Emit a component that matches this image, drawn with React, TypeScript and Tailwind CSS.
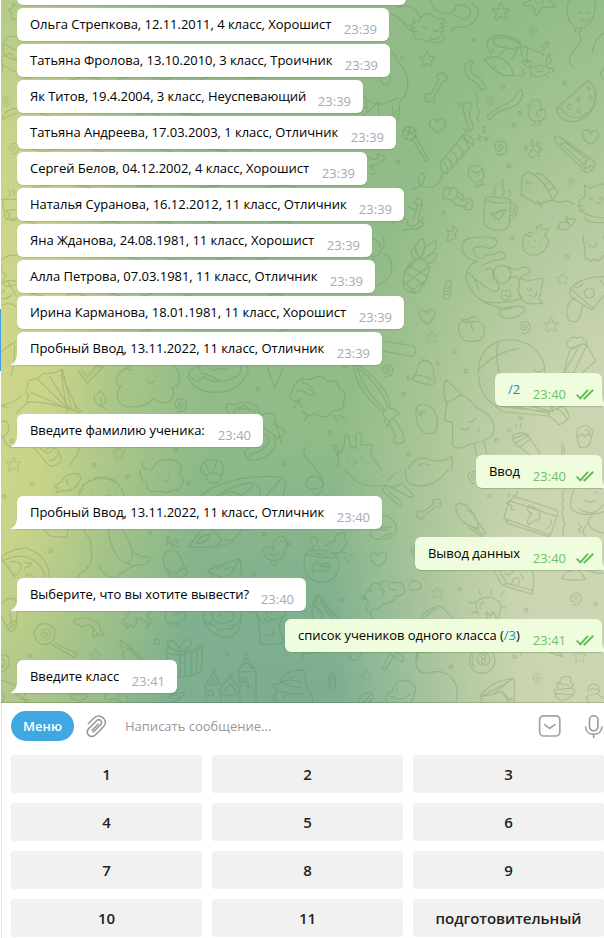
import type { ReactNode } from "react";

type Incoming = { text: string; time: string; box: string; last?: boolean };

const students: Incoming[] = [
  { text: "Ольга Стрепкова, 12.11.2011, 4 класс, Хорошист", time: "23:39", box: "w-[372px]" },
  { text: "Татьяна Фролова, 13.10.2010, 3 класс, Троичник", time: "23:39", box: "w-[373px]" },
  { text: "Як Титов, 19.4.2004, 3 класс, Неуспевающий", time: "23:39", box: "w-[346px]" },
  { text: "Татьяна Андреева, 17.03.2003, 1 класс, Отличник", time: "23:39", box: "w-[379px]" },
  { text: "Сергей Белов, 04.12.2002, 4 класс, Хорошист", time: "23:39", box: "w-[350px]" },
  { text: "Наталья Суранова, 16.12.2012, 11 класс, Отличник", time: "23:39", box: "w-[387px]" },
  { text: "Яна Жданова, 24.08.1981, 11 класс, Хорошист", time: "23:39", box: "w-[355px]" },
  { text: "Алла Петрова, 07.03.1981, 11 класс, Отличник", time: "23:39", box: "w-[358px]" },
  { text: "Ирина Карманова, 18.01.1981, 11 класс, Хорошист", time: "23:39", box: "w-[387px]" },
  { text: "Пробный Ввод, 13.11.2022, 11 класс, Отличник", time: "23:39", box: "w-[365px]", last: true },
];

const keys = ["1", "2", "3", "4", "5", "6", "7", "8", "9", "10", "11", "подготовительный"];

function InBubble({ text, time, box, last }: Incoming) {
  return (
    <div className={`relative ml-4 flex h-[33px] shrink-0 justify-between rounded-[6px] bg-white pl-[13px] pr-3 shadow-[0_1px_1px_rgba(80,110,70,0.25)] ${box} ${last ? "rounded-bl-none" : ""}`}>
      {last && (
        <svg className="absolute -left-[6px] bottom-0" width="7" height="12" viewBox="0 0 7 12">
          <path d="M7 0H6C6 6 4 9.5 0.3 11.2C0 11.5 0.1 12 .6 12H7Z" fill="#fff" />
        </svg>
      )}
      <span className="pt-[7px] leading-[18px] tracking-[-0.03px] whitespace-nowrap">{text}</span>
      <span className="pt-[12px] leading-[18px] text-[#a0acb6]">{time}</span>
    </div>
  );
}

function OutBubble({ children, time, box }: { children: ReactNode; time: string; box: string }) {
  return (
    <div className={`relative mr-[2px] flex h-[33px] shrink-0 self-end rounded-[6px] rounded-br-none bg-[#effdde] pl-[13px] shadow-[0_1px_1px_rgba(90,140,70,0.4)] ${box}`}>
      <span className="pt-[7px] leading-[18px] tracking-[-0.03px] whitespace-nowrap">{children}</span>
      <span className="ml-auto pt-[12px] leading-[18px] text-[#6cc264]">{time}</span>
      <svg className="mt-[16px] mr-2 ml-[10px]" width="18" height="11" viewBox="0 0 18 11" fill="none" stroke="#5cbf52" strokeWidth="1.9">
        <path d="M.6 5.6L4.3 9.3L12 .8M7.6 8.6L8.5 9.4L17.2 .8" />
      </svg>
      <svg className="absolute -right-[2px] bottom-0" width="2" height="12" viewBox="0 0 2 12">
        <path d="M0 0C0 4 .7 7 2 9V12H0Z" fill="#effdde" />
      </svg>
    </div>
  );
}

type P = { x: number; y: number; s?: number; r?: number };

const at = ({ x, y, s = 1, r = 0 }: P) => `translate(${x} ${y}) rotate(${r}) scale(${s})`;

const Star = (p: P) => (
  <path transform={at(p)} d="M-3-25Q0-29 3-24L8-9L23-10Q28-9 24-5L13 4L18 19Q18 25 13 22L0 13L-13 23Q-18 25-17 19L-13 4L-24-4Q-28-9-22-10L-8-9Z" />
);
const Heart = (p: P) => (
  <path transform={at(p)} d="M2 23Q-24 8-24-6C-24-20-6-24 0-9C6-27 26-22 24-5Q21 10 2 23Z" />
);
const Spiral = (p: P) => (
  <path transform={at(p)} d="M3 2C-1 5-6 0-2-5C4-11 13-3 9 6C4 16-12 13-13 0C-14-14 2-22 14-14C26-5 22 15 8 21Q0 24-6 21" />
);
const Candy = (p: P) => (
  <path transform={at(p)} d="M-12-14Q12-18 12-10V12Q0 20-12 13ZM-12-14L-9-30Q2-38 9-29L11-15M-12 13L-8 30Q2 36 10 29L11 14M-12-4L12-11M-12 6L12 0" />
);
const Bone = (p: P) => (
  <path transform={at(p)} d="M-27-6H27C24-19 38-22 42-12C54-12 53 2 44 3C50 15 34 20 27 7H-27C-32 20-46 16-42 5C-55 2-52-12-42-11C-40-23-25-19-27-6Z" />
);
const Chick = (p: P) => (
  <path transform={at(p)} d="M-22-23L-33-16L-22-12C-38 5-32 28-8 34C22 38 36 14 22-6L8-2C18-22 10-38-6-37C-19-36-24-28-22-23M-8-24V-22M14-4C-8-2-8 16 8 18M-8 34V46L-17 48M8 34V46L0 48" />
);
const Dots = ({ list }: { list: number[][] }) => (
  <>
    {list.map(([x, y], i) => (
      <circle key={i} cx={x} cy={y} r={5} />
    ))}
  </>
);

function Wallpaper() {
  return (
    <svg className="absolute inset-0" width="603" height="703" viewBox="1 0 603 703" fill="none" stroke="#4f8040" strokeOpacity="0.25" strokeWidth="3.5" strokeLinecap="round" strokeLinejoin="round">
      {/* upper left strip, mostly behind messages */}
      <g transform="scale(.33333)">
        <path d="M24 28L36 24L40 10L50 20M24 28L34 38L36 60L50 54M10 130Q20 102 50 110M12 132L50 152M10 130V160Q20 176 50 180M6 170L30 160L50 178M3 190Q28 210 50 216M4 174Q12 196 6 216" />
        <path d="M8 350Q22 326 50 325M8 358Q26 345 50 340M8 350V358M5 598H50M8 600L16 655Q32 664 50 660M24 570Q40 578 26 586M38 570Q48 576 42 584M18 632L50 628M18 632L30 645L20 658L50 656" />
        <Spiral x={16} y={302} s={0.7} /><Spiral x={38} y={444} s={0.8} />
        <path d="M72 235L110 228M210 240L260 230L300 236M355 238L400 228M460 234Q490 242 520 233M600 238L630 230M740 235L790 230M120 341L150 348M410 344L440 338L480 345M540 340L600 346M90 447L130 455L180 446M270 446L310 456M480 448L520 456M620 445L680 455M720 446L750 452M100 562L150 556M230 556L270 562M410 560L460 556M600 562L660 556M800 562Q850 552 890 562M70 663L110 671M300 670Q330 658 360 670M470 664L520 670M620 663L650 670M810 670Q840 656 880 671" />
      </g>
      {/* upper right */}
      <g transform="translate(302 0) scale(.33333)">
        <path d="M265 40L300 60Q308 74 320 88L345 95M284 22L310 18Q330 18 345 36L356 53Q375 30 395 50L410 60Q425 50 430 65L416 70L430 80L415 83L425 94L413 96L426 112Q424 130 408 129L350 117Q334 116 335 96L325 90L340 82L320 78L338 70L330 60L350 66L356 53M385 0C388 24 410 42 440 40C455 36 462 24 462 16C490 10 520 28 500 50C480 66 470 45 450 42M445 94C465 70 490 90 510 70C532 50 540 30 510 12M362 78Q368 92 378 80M394 88Q402 100 409 90M383 116Q402 122 414 112M384 105H386M405 109H407" />
        <path d="M661 12L688 0M661 12Q670 22 690 17Q700 28 703 46Q715 34 722 20Q742 26 760 20Q754 10 738 0M700 0L704 8M724 2L720 9" />
        <path d="M823 84C785 60 790 0 808 0M823 84C860 90 885 50 878 0M823 84L818 94Q830 100 841 90L832 84M832 98C850 140 800 150 802 182Q804 198 817 202M831 35Q832 42 838 39M855 37Q860 41 865 38M835 58Q850 72 862 56" />
        <path d="M557 140C550 110 580 98 620 110C660 120 664 142 645 148C600 144 575 140 572 118C610 100 655 128 655 138M557 140L566 162M572 145L570 162M645 148L630 180M655 140L660 170M547 178L573 170C600 170 630 190 634 226C610 232 590 220 574 207L582 197M547 178Q557 190 573 206M610 150L590 165M634 226L665 228M640 142L670 140L718 160Q734 160 720 170M676 145L674 185M718 143L735 125Q744 126 735 140L715 157" />
        <path d="M683 211Q710 182 744 208Q744 225 710 230Q685 232 683 211ZM690 198L676 200Q655 190 665 180Q674 178 675 190Q680 176 688 185Q688 194 680 206M734 196Q730 170 742 162V176Q750 176 747 185L738 195M744 203Q760 203 752 216M664 209Q656 218 670 222M684 230V234M736 228L737 233M698 205H704M720 206H724M705 214Q714 220 720 212" />
        <path d="M490 194Q506 176 515 185C496 205 506 224 530 234Q545 242 551 263Q545 274 536 270Q536 256 520 248C494 234 484 218 490 194ZM556 348Q580 325 612 312Q640 300 645 278Q650 268 661 272C666 300 645 320 615 326Q580 335 564 358Q556 358 556 348ZM484 318Q490 302 508 309C508 330 496 340 505 358Q514 370 514 386L498 395C503 370 480 350 484 318ZM526 274C512 290 538 300 526 310C518 322 540 330 530 342Q520 352 532 367" />
        <path d="M763 325Q770 368 820 364C885 350 890 280 874 260M763 325L860 240L874 260M763 325L778 323Q790 356 830 352C872 340 882 310 880 280M828 292Q840 298 830 305Q820 302 828 292M803 311Q812 320 802 328Q790 320 803 311M831 323Q842 335 830 339Q820 330 831 323M862 285Q875 292 867 300Q856 298 862 285M858 258Q870 264 862 270Q852 266 858 258" />
        <path d="M329 415L372 484Q380 484 376 474L340 407M310 405Q330 400 340 388M306 388Q330 400 342 414M324 382Q318 400 316 416" /><circle cx="322" cy="400" r="20" />
        <path d="M416 486L485 403Q500 402 514 420Q518 436 505 440L435 520Q420 520 416 500ZM435 520Q440 505 425 487M447 508Q456 484 430 470M464 489Q470 468 445 452M480 470Q490 450 462 432M496 450Q505 430 480 411M485 403Q486 420 514 435M422 520C418 565 370 570 350 550C345 520 360 515 367 525C370 550 350 564 327 569M488 395Q498 390 482 384M540 380L550 379L542 390L552 394L544 398M530 405L537 410L526 415L535 422" />
        <path d="M757 412L770 408L858 470Q855 490 835 500L763 430ZM757 412L763 430M858 470L876 482Q884 495 876 500Q860 494 845 513Q835 512 835 500M845 513Q860 525 876 500M790 427L849 473M775 430L842 490M790 427L775 436M850 482Q858 496 843 504" />
        <path d="M682 460Q692 440 704 456Q716 462 710 470Q698 466 692 474Q680 470 682 460ZM670 436Q664 448 674 452Q680 444 670 436M690 420Q680 434 693 440Q700 430 690 420M708 425Q698 436 710 442Q720 430 708 425M716 443Q706 450 714 456Q724 450 716 443" />
        <path d="M520 550L525 562L535 553L545 556L540 543M502 530C492 510 505 494 526 498C550 505 552 535 535 543C520 550 508 542 502 530ZM507 511Q525 522 545 510M518 522Q524 510 530 525" />
        <path d="M422 582L432 560L446 568L456 562L468 572L463 590L450 600L438 598L430 592L422 600ZM463 590Q475 590 480 603L500 594L512 604L508 628L492 630L482 618Q460 620 450 600M472 578L484 585L480 603M446 568L440 585M492 630L488 618L500 606" />
        <path d="M338 604A11 10 0 1 1 360 606A11 10 0 1 1 338 604M346 616L334 660M360 614L348 658M302 650L320 662L315 670C325 688 345 680 352 660L360 668M360 650L364 675Q340 694 325 686L302 692M320 622L348 632" />
        <path d="M549 594C570 586 620 594 626 602Q615 612 580 607Q552 604 549 594ZM549 594L545 672Q560 692 600 690Q620 688 622 670L626 602M626 612C655 608 650 658 620 660M624 625Q645 622 634 642L622 650M562 642L612 628L592 660L582 652L576 657V644L612 628M562 642L576 646M574 585C590 575 570 570 582 560M600 587C620 570 590 560 604 538M620 590Q632 578 618 570" />
        <path d="M657 585L660 528L680 515Q730 540 752 602C725 600 710 620 700 608C680 598 665 590 657 585ZM680 515Q694 530 712 520Q750 545 767 575L752 602M670 545L680 553L688 546M752 602L775 607Q800 598 815 613M740 542L725 560M755 560L740 576M706 604L720 620" />
        <path d="M848 555L850 590M848 555L866 566Q880 555 905 552M850 590Q825 600 832 625Q845 650 906 654M862 600Q866 590 872 598M892 595Q905 590 902 600M880 608L888 612L896 604M850 654Q850 670 906 668M828 617L845 619M832 632L848 628M802 674C780 650 800 640 795 660Q808 650 822 660Q802 690 780 690Q770 690 772 670Q780 664 800 668M772 670L765 690M668 705Q690 690 696 700M705 676L703 690L718 672L720 690L740 686L728 705M440 705L436 688L450 696L454 678L466 690L457 705" />
        <path d="M245 166C265 140 280 160 286 186C325 215 330 270 290 310M295 167L297 178M302 165L305 180M186 290Q220 325 260 305L288 295M186 345L228 306L232 360M240 225Q230 250 250 256Q270 245 264 225M182 322Q200 330 192 305M270 315L275 345L294 318L288 360M196 470Q230 490 228 460L250 470Q244 490 200 500M204 520Q230 530 210 500M870 160Q880 110 906 100M906 205L896 220L903 240M280 650L302 640L270 674" />
        <Star x={596} y={36} /><Star x={375} y={178} s={0.9} /><Heart x={406} y={376} /><Heart x={864} y={410} s={1} r={12} />
        <Spiral x={689} y={92} s={0.7} /><Spiral x={564} y={300} s={0.65} /><Spiral x={592} y={441} s={1.05} /><Spiral x={805} y={545} s={0.6} />
        <Bone x={403} y={264} r={-60} s={1} /><Chick x={706} y={333} s={0.9} />
        <Dots list={[[517, 120], [788, 249], [603, 260], [653, 340], [635, 374], [476, 316], [552, 416], [621, 497], [287, 487], [424, 638], [47, 445]]} />
      </g>
      {/* middle left */}
      <g transform="translate(0 235) scale(.33333)">
        <path d="M4 75Q30 55 50 62M4 90Q0 115 20 120Q0 140 18 155L48 150M4 190Q20 195 35 180M15 165L4 175M24 140L48 182M5 145Q22 130 48 140M6 210Q30 200 48 214M4 350Q35 325 48 320M44 330Q45 395 32 420M4 512Q50 500 65 480M4 512L25 520" />
        <path d="M78 469L86 437L112 430L130 415L160 415L188 403L185 418L228 516L218 525Q140 500 78 500Q90 485 78 469M188 403L215 525M184 420L202 532M150 425L210 524M112 432L205 522M90 470L200 520M50 535Q70 510 90 502M228 516L245 530M218 525L237 532" />
        <path d="M234 407L262 445L312 392M246 407L262 426L290 392M290 392L308 396M282 480Q300 475 300 468Q320 485 318 500Q304 520 290 506Q280 490 282 480ZM303 485V513L320 522" />
        <path d="M395 391C370 400 345 420 350 445Q352 452 364 453C340 480 355 510 380 515Q440 520 460 490Q490 515 512 495Q530 480 515 458Q545 450 538 420Q534 400 520 392M438 430V435M467 420V425M442 440Q455 450 464 437M384 393Q378 408 396 404" />
        <path d="M605 392Q560 400 565 430Q590 475 650 472Q720 470 744 410Q744 395 738 391M570 420Q590 455 610 425Q650 450 700 430Q730 415 720 392M598 400Q600 420 620 418L660 437M624 396Q635 412 660 400M660 400Q685 410 690 392M800 392L824 460L850 395M870 490C868 475 880 465 883 450L898 433L906 435M870 490Q890 505 906 490M890 470L900 465M880 522L896 500L906 515" />
        <path d="M690 538C675 525 675 510 685 505Q705 515 720 503Q755 495 775 520L780 545C800 530 825 530 825 550L822 570Q848 575 855 590Q852 605 830 610M700 538Q700 520 720 518L760 525Q770 535 768 545M720 525Q716 512 730 510Q745 512 744 527M790 580L808 590Q830 600 828 625C815 665 780 675 755 677Q735 670 733 650L745 640M790 600Q810 600 808 620Q790 650 760 655Q745 660 752 670M825 550L845 630" />
        <path d="M52 637Q20 645 6 600M4 560Q25 550 26 580Q25 600 4 610M100 636L145 690Q160 700 182 680Q185 665 176 650L160 637M118 637L132 650L150 637M134 652Q150 660 160 640M148 675Q165 680 174 655M206 637M238 637Q235 660 208 690M405 637M440 705Q418 690 428 678M455 705Q470 670 500 675Q520 670 545 690L540 705M600 705Q605 675 630 675Q670 668 670 705M615 685L625 705M650 680L640 705M90 176L130 183M200 180Q230 170 260 184M330 176L370 184M420 184L460 176M550 180L590 184M800 184Q830 172 850 184M380 66L420 75M500 70L540 76M650 75L700 68M770 74L800 68M420 290Q440 280 450 292M830 292L860 284" />
        <Spiral x={538} y={508} /><Star x={357} y={655} s={0.7} /><Star x={41} y={689} s={0.8} />
        <Dots list={[[773, 462], [526, 646], [282, 691], [850, 684], [36, 617]]} />
      </g>
      {/* middle right */}
      <g transform="translate(302 235) scale(.33333)">
        <path d="M310 105Q340 50 370 80C398 95 365 150 350 170Q330 182 307 160Q298 140 310 105ZM318 90L378 125M308 110L368 150M305 138L342 175M378 95L306 150M368 140L320 172M342 75L308 112M345 75C320 60 325 42 340 35Q345 55 352 68C325 35 350 15 362 10Q372 30 364 55Q360 65 355 75C365 30 385 20 402 18Q408 45 380 60L365 74Q390 50 405 57Q398 85 372 88" />
        <path d="M205 60L218 75M240 0Q250 15 244 40M210 10Q240 20 236 50Q230 65 212 66M244 56Q280 70 265 120Q250 140 220 155M440 0Q430 20 435 18L464 8L458 0" />
        <path d="M527 80C470 70 470 20 500 10Q540 2 580 10C590 25 580 38 560 40C540 30 505 35 515 50C520 70 545 80 550 58Q570 65 590 50Q610 50 610 65Q600 78 580 75L540 90M527 80C490 90 480 130 510 170C530 200 570 210 595 220L640 215M495 115Q510 105 530 165M510 125L550 155Q580 180 592 160L582 130M550 105Q580 90 575 130M545 200Q600 210 660 190L648 170Q655 145 650 130Q635 120 622 130M618 95C640 112 650 100 665 95Q690 100 680 115Q665 115 650 135M650 130L670 135Q690 138 705 132L722 130V150L716 160Q720 175 710 188L722 206H695Q660 210 648 172M595 220Q590 240 600 245Q625 260 660 235Q675 225 660 215Q640 210 625 220L595 225M600 180Q595 160 612 170Q622 160 625 175Q630 192 612 195Q595 196 600 180M607 180L620 184M675 160L682 168L690 160M695 185Q705 180 706 170M682 180L690 184" /><circle cx="600" cy="118" r="27" />
        <path d="M665 5Q655 45 680 58Q725 70 740 20L730 0M672 0Q680 10 690 0M680 20V22M700 15V17M715 25V27M675 38V40M695 35V37M712 45V47M695 52V54M725 10V12M846 0C838 20 856 40 846 65Q848 76 858 70L866 80Q878 66 888 78Q898 70 906 60M855 18V22M877 12V16M860 28Q880 50 884 20M906 0V10" />
        <path d="M805 160C830 135 870 125 906 125M805 160Q800 180 812 190L870 225L906 180M805 160L875 222M820 190C790 200 790 240 800 255Q825 270 835 240L842 210M818 158Q840 155 842 145M895 135L906 150" /><circle cx="862" cy="174" r="15" />
        <path d="M500 252C460 250 465 300 485 314Q508 325 535 314C560 290 545 252 510 260Q505 280 515 285M508 260Q495 252 480 254Q490 270 508 260M500 252Q510 240 525 250" />
        <path d="M242 318L330 332Q345 336 340 351Q338 366 325 363L240 348" />
        <path d="M785 412Q800 355 806 340M785 412L820 414M806 340Q855 320 855 330L881 378L840 414M806 340L820 340M830 335L790 408M855 330L815 412M800 338Q785 320 802 318Q808 300 825 310Q840 300 845 315Q865 320 850 330" />
        <path d="M528 415C530 330 590 310 640 315C700 325 730 370 728 412M530 425Q530 460 555 492L600 530L740 543L750 513M590 316C580 350 582 380 592 415M650 340C600 350 560 370 530 405M697 405L710 412L728 400M600 515L745 530M640 515L742 535M690 515L755 530L750 513M745 530L782 513Q803 535 800 545Q790 565 770 569Q755 550 740 543M765 520Q785 530 795 558" />
        <path d="M155 392C160 450 200 500 245 530M155 392Q170 385 180 400C230 430 270 490 263 520M163 392C180 450 220 500 252 528M168 400C210 430 250 480 258 520M245 530Q240 545 252 550L262 560Q275 545 292 538Q285 522 263 520M252 550L248 558L256 575Q265 560 262 560M262 565L282 604C270 610 275 628 292 626C310 625 310 605 300 590L275 550" />
        <path d="M332 429C345 420 345 400 350 385Q365 370 382 380C400 395 390 420 400 435Q395 460 365 445Q335 440 332 429ZM340 420Q365 420 395 437M330 430L340 420M368 448L380 444M360 374V370M322 420L324 433M316 424L318 434M402 385L408 390M406 378L412 386M382 425V428" />
        <path d="M342 540C335 500 375 500 395 525Q415 560 400 590Q375 605 355 585Q345 570 342 540ZM344 525L357 540L360 530L370 528M350 540L357 543" />
        <path d="M430 437Q420 460 430 493L432 502Q460 495 475 478Q480 475 465 465L435 436ZM436 500C430 540 420 560 440 560Q452 560 452 570L452 630Q460 645 490 635Q500 625 515 625Q560 615 572 600Q580 575 572 560Q560 530 525 520Q515 500 475 478M500 560Q515 560 520 548M530 577V590M475 580Q490 590 500 580M515 625L525 660M545 620L555 655" />
        <path d="M632 600L660 592L680 602L685 612M632 600Q628 615 640 625L652 637L685 612M640 625L682 600M655 637L690 665M685 612L715 655M632 610L678 596M612 585L622 590M620 578L628 586M655 565V578M642 570L645 580M780 625V660M787 635V655" />
        <path d="M824 600C825 570 850 565 868 580Q875 595 868 605L864 625Q850 645 832 635Q828 620 824 600ZM824 600L830 605L840 597L848 605L858 597L868 605M850 585Q862 583 862 595" />
        <path d="M0 430Q20 440 40 425Q70 420 75 440Q110 430 110 460Q140 470 125 500Q130 530 95 525Q70 560 40 535Q15 550 0 530M0 465Q25 490 40 475L20 460M5 530L15 545L5 560M95 540L105 555M110 540L130 550M0 440L30 455" />
        <path d="M93 630Q110 625 108 660L125 640L130 600Q140 585 145 635L163 640L160 600Q170 585 178 600V630L210 628L205 655L212 670L240 705M93 630L110 670L107 700M140 670L143 675M175 668L180 672M150 690L165 680M12 637C-15 665 45 690 62 735M320 700Q330 670 370 668Q410 690 449 664Q455 690 448 705M350 692Q360 680 380 690" />
        <Candy x={437} y={165} r={8} s={0.85} /><Heart x={375} y={244} /><Star x={390} y={307} s={0.7} /><Star x={781} y={133} s={0.7} /><Star x={748} y={271} s={0.8} />
        <Spiral x={666} y={275} s={0.9} /><Spiral x={254} y={405} s={0.9} />
        <Dots list={[[629, 10], [795, 64], [458, 350], [491, 408], [305, 477], [84, 593], [320, 658], [584, 616], [655, 548], [128, 392]]} />
      </g>
      {/* bottom left */}
      <g transform="translate(0 470) scale(.33333)">
        <path d="M163 50L176 55L168 69L185 62C215 68 240 45 242 20C235 5 205 10 190 25Q180 40 176 40ZM200 28Q198 38 205 42" />
        <path d="M235 78Q240 45 275 32Q300 20 330 30Q365 40 372 77M238 60L245 70M250 60Q240 40 260 42Q265 25 278 32Q285 18 300 24Q315 15 325 28Q345 25 348 40M275 60V64M348 60V64M290 77Q300 85 330 77" />
        <path d="M250 178L262 200Q270 200 270 212Q278 225 270 232Q282 245 272 252Q282 265 272 272Q275 285 262 290Q260 305 245 305L232 322M325 178C330 240 360 280 385 278C410 260 390 210 365 178M400 245Q410 260 450 262C455 275 440 285 410 285Q390 290 385 278M335 250M298 285Q305 320 345 322M350 322Q370 300 410 285M130 178L150 198L200 203L205 178" />
        <path d="M420 0Q415 25 440 38Q440 75 480 62Q495 75 520 60Q545 65 543 45Q560 30 540 15L542 0M480 20V24M508 20V24M488 30Q498 42 506 30M602 0Q605 15 620 15L635 5L660 15Q672 10 670 0M618 16Q620 40 645 40Q665 35 664 14" />
        <path d="M605 75C650 40 720 20 790 20Q855 15 858 40L850 75M650 77Q720 35 760 40L750 60L722 77M660 77Q700 55 722 77M760 40Q785 50 780 77M800 77L840 30M565 232L605 178M565 232Q680 235 700 210L725 178M590 220Q595 195 632 193Q620 220 590 220M633 178L665 208L650 232M665 208L700 210" />
        <path d="M500 225L503 198Q518 208 500 225M513 228Q515 210 535 208Q535 225 513 228M517 234L538 230M490 270C490 240 520 235 535 250L558 300Q565 320 540 322L515 323L497 300ZM497 300Q505 290 510 308Q520 300 532 310Q540 295 555 295M523 310Q530 318 535 308" />
        <path d="M790 245C795 220 820 235 822 240Q815 215 830 203Q850 190 860 215Q865 230 852 240C862 255 840 275 815 270Q795 268 790 245ZM860 215L872 222L858 228M843 212V214M806 250Q825 262 838 248M815 272V282L828 286M829 270V280" />
        <path d="M622 302Q680 275 720 267Q728 295 720 323M622 302L640 323M622 302L665 323M655 300C655 285 672 285 678 300Q690 285 700 295Q698 310 678 322M720 267L700 300" />
        <path d="M5 260Q40 235 65 237Q75 228 90 240Q145 260 148 322M5 275Q60 245 100 270Q135 295 135 322M30 278Q40 270 60 280Q68 300 48 315Q28 310 28 290M5 265L45 323M75 275Q85 285 95 278Q90 295 78 290L72 300M75 320Q85 305 100 320M5 400Q40 370 50 400M30 423L35 470M5 440L25 480Q40 490 48 470L52 423M22 465L50 450M25 475L50 462" />
        <path d="M163 520L228 549Q235 560 222 562L155 524" /><circle cx="134" cy="492" r="31" /><Spiral x={134} y={492} s={0.85} />
        <path d="M220 455Q225 445 240 447Q260 438 290 455Q305 465 300 482Q315 485 310 495Q300 500 292 490Q285 505 278 498Q275 485 285 480Q275 465 255 465Q245 478 235 462Q225 465 220 455Z" />
        <path d="M390 423L378 445Q360 455 368 465L378 460L380 475L390 462L400 473L410 460L408 445Q420 440 445 460L440 475L452 462Q455 445 440 440Q445 430 455 423M500 423Q490 440 500 455Q525 465 550 450Q560 430 550 423M525 435Q540 430 543 423M515 455V465L505 468M535 455V465L525 468" />
        <path d="M612 423C600 465 640 500 680 502C715 500 730 460 720 423M640 423Q630 440 645 455Q675 465 700 450Q710 430 690 423M610 450Q625 465 640 465Q660 490 680 475Q700 485 720 450M655 440L665 430M690 470L700 465M630 455L635 462" />
        <path d="M765 423Q780 450 780 520Q810 530 855 515M770 430Q780 450 790 460M800 430Q805 460 850 440Q865 425 855 423M850 440Q825 470 855 515M802 423V428M815 423V430M795 445L800 455L815 452M800 495Q825 500 820 478" />
        <path d="M360 510L370 557L378 570M360 510L396 535L430 570M370 550L385 535L396 540M378 530L420 570M500 530L540 545Q570 550 607 525L605 600Q580 622 535 620M500 530L502 570M498 545Q540 570 607 535M540 545V620M555 550V620M575 548V615M590 545V610M540 545Q500 540 503 515Q520 500 540 540Q545 505 570 510Q585 530 545 543" />
        <path d="M615 645L640 607L660 645M615 645L620 697M655 645H616M626 645L638 625L650 645M660 655L690 620L720 655L715 675H662ZM662 675V697M720 670V697M714 605L738 562L770 605ZM714 605L722 650M768 605V697M720 595L738 577L760 597M640 607V600L648 604M690 620V612L700 616M738 562V555L748 558M740 650H755M745 640V660M675 665L690 640L710 665" /><circle cx="734" cy="630" r="8" /><circle cx="632" cy="670" r="8" />
        <path d="M820 645L840 640Q870 620 906 640M820 645L830 660Q860 675 906 670M840 640Q850 605 890 600L906 602M830 660L820 690L832 697M860 665L850 690M870 620Q878 625 882 620M842 634Q870 655 906 650M210 670Q240 680 265 670M210 675Q220 695 240 690Q260 688 265 675M318 670Q310 685 320 690M350 670Q360 675 352 682M330 690Q350 680 365 697M375 675Q390 690 380 697M505 685Q520 670 545 668Q560 665 550 675Q540 690 510 697M510 672Q530 665 540 690M4 630Q40 640 50 650M5 697Q20 680 5 670M45 670L80 697M60 687L90 690M75 670L70 685" />
        <path d="M4 555Q30 550 28 580Q20 605 4 605M4 568Q15 568 13 580Q12 590 4 590" />
        <Star x={286} y={556} s={0.65} />
        <Dots list={[[97, 41], [566, 40], [450, 188], [152, 243], [792, 192], [762, 313], [682, 553], [90, 557], [13, 79], [382, 20]]} />
        <circle cx="470" cy="516" r="8" />
      </g>
      {/* bottom right */}
      <g transform="translate(302 470) scale(.33333)">
        <path d="M62 30C70 55 55 75 40 75Q30 70 38 55M12 40Q15 20 35 20C55 18 65 35 60 50Q35 65 15 50ZM130 0C160 40 190 55 250 45Q270 60 300 40M250 45L240 62L292 108Q305 112 296 95L262 65M265 50L320 80Q335 85 335 75L300 40M310 0Q310 30 320 40C360 60 410 40 438 0M240 12L245 18M280 5V10M255 35L275 15" />
        <path d="M205 195L215 205Q265 215 280 190Q290 160 270 150Q255 130 235 140Q215 140 210 160L245 165M205 195Q200 178 225 178L260 180M240 200L270 190M226 165Q240 180 270 170" />
        <path d="M10 250Q45 230 95 250C125 280 110 335 60 338C10 335 0 285 10 250ZM12 252Q40 265 108 262M30 240L35 225M38 245Q50 260 72 250M25 220Q20 205 35 200Q48 205 46 222M66 230L85 215Q100 220 100 200Q110 185 130 190L128 205Q140 220 130 225Q120 235 115 248L95 250M120 245L135 252M125 260L140 275M140 255H152M30 290L45 275L60 285Q75 275 85 285Q82 300 65 305L42 300L32 305ZM48 285Q60 295 80 288" />
        <path d="M462 105Q470 95 490 105Q530 140 530 175Q490 170 470 140Q460 120 462 105ZM510 170L545 195M500 172L540 200M532 160L550 190M492 120Q515 125 522 150" />
        <path d="M622 92L765 140L745 195L605 145ZM622 92L638 80L765 120Q770 130 765 140M610 145L615 160L740 200L745 195M622 92L614 100L630 107L627 118L640 120M680 105Q670 125 690 130Q670 150 680 165L700 150Q720 155 710 120ZM632 78Q650 75 645 65M735 175Q750 165 748 150M625 75Q615 70 620 80" />
        <path d="M785 60Q778 80 785 90Q775 100 785 115Q775 130 785 140Q778 155 790 160Q778 175 785 200M815 60Q800 100 810 120Q850 145 905 125M835 118Q870 145 905 105M840 75V80M880 65V70M850 92Q865 102 880 90M870 140C850 150 860 180 890 185L906 190M830 160L838 170L828 180L840 188M858 160Q835 180 850 200M810 300Q780 310 780 325Q810 335 850 328Q840 310 830 300M860 300Q870 310 906 310" />
        <path d="M575 300L600 345L690 373Q700 330 690 300M600 345L615 340L690 360M590 300L615 340M630 340Q630 325 645 322Q655 330 650 345M655 312L665 325M610 310Q620 320 635 303" />
        <path d="M530 435Q515 400 530 390Q560 370 590 395C605 415 590 425 588 447M555 447L553 425L565 438L572 425L582 440V447M535 375L532 363M567 372V360M595 378L605 365M520 398H503M600 410H612M525 425L508 430M548 395Q530 400 535 415" />
        <path d="M200 395Q175 375 205 355Q205 335 235 340Q250 325 270 340Q305 330 305 355Q315 375 280 380Q270 405 245 400Q240 415 210 420Q200 445 215 446M200 395Q180 420 205 430M260 345Q255 360 280 360M230 340L235 355Q255 360 240 380M198 360L215 367" />
        <path d="M320 350Q325 325 345 333C365 345 360 360 340 360Q325 365 320 350ZM45 375L110 447M45 375C25 400 30 425 32 447M45 375L38 410Q65 420 60 447M55 395L95 447M350 447Q370 420 410 408Q435 420 452 447M360 447L402 415M70 425L80 435" />
        <path d="M240 595L265 548M240 595Q250 605 256 590L280 548M262 550L300 575Q310 570 302 560L285 548M345 548C335 590 345 620 400 605Q440 600 460 640Q470 670 462 697M350 550Q330 590 360 610M345 548L385 546" />
        <circle cx="540" cy="572" r="38" /><circle cx="545" cy="567" r="19" />
        <path d="M545 567C530 562 542 550 550 558Q552 565 545 567C533 572 540 586 550 578Q554 570 545 567M515 555Q505 570 515 590" />
        <path d="M535 680Q560 635 635 625Q640 660 635 690M535 680L575 672L600 665L625 690L640 692M535 680Q580 660 635 625M575 672Q610 640 635 625M600 665L620 697M615 690L630 685M535 680L540 697" />
        <path d="M758 655Q755 680 775 690Q800 695 818 665Q815 650 800 655L760 660M770 655Q755 635 775 635Q775 618 790 620Q810 615 805 635Q820 645 805 655M760 670L812 675M770 640L800 645M858 665Q855 645 875 642Q895 645 892 665Q885 675 865 675M865 660Q872 650 878 660M882 655L888 660M858 675Q850 685 860 697M890 675L906 685M255 697Q245 670 270 665C280 620 335 625 340 655Q340 680 325 697M285 655V662M310 650V657M270 680Q295 700 325 672M265 680L280 683M170 697Q175 670 200 667Q215 670 214 680Q210 690 200 697M185 697L205 675M0 600Q15 600 10 640L30 680L32 697M140 560Q145 575 165 570L180 548M145 560L140 548M0 570L5 550M18 552L35 548M745 548L780 560Q780 550 770 548M660 560L655 548" />
        <Bone x={381} y={118} r={-35} s={0.85} /><Heart x={229} y={267} /><Star x={406} y={369} s={0.65} /><Star x={193} y={618} s={0.65} /><Star x={833} y={560} s={0.7} /><Candy x={91} y={635} s={0.8} />
        <Spiral x={510} y={20} s={0.9} /><Spiral x={339} y={245} s={0.9} /><Spiral x={818} y={385} s={0.9} /><Spiral x={704} y={624} s={0.75} />
        <Dots list={[[562, 79], [118, 390], [184, 383], [472, 356], [673, 420], [881, 403], [447, 590], [638, 560]]} />
      </g>
    </svg>
  );
}

export default function App() {
  return (
    <div className="relative flex h-[938px] w-[604px] flex-col overflow-hidden bg-white pl-px font-['Open_Sans','Noto_Sans',sans-serif] text-[13px] text-black">
      <div className="absolute top-[309px] left-0 z-10 h-[62px] w-px bg-[#419fd9]" />
      <div className="relative h-[703px] w-[603px] shrink-0 overflow-hidden bg-[#91bb88]">
        <div className="absolute inset-0 bg-[radial-gradient(ellipse_320px_300px_at_45%_103%,#7aac91_0%,rgba(124,174,144,0.85)_40%,rgba(130,178,140,0)_100%)]" />
        <div className="absolute inset-0 bg-[radial-gradient(ellipse_310px_620px_at_106%_84%,#ced7b4_0%,rgba(204,213,178,0.97)_40%,rgba(196,209,170,0.7)_62%,rgba(160,195,148,0)_100%)]" />
        <div className="absolute inset-0 bg-[radial-gradient(ellipse_220px_680px_at_-3%_48%,#ced68b_0%,rgba(204,213,138,0.95)_32%,rgba(188,206,136,0.55)_62%,rgba(150,190,136,0)_100%)]" />
        <Wallpaper />
        <div className="absolute inset-x-0 bottom-0 h-px bg-black/15" />
        <div className="relative flex h-full flex-col justify-end pb-[10px]">
          <div className="mb-[3px] ml-4 h-[33px] w-[389px] shrink-0 rounded-[6px] bg-white shadow-[0_1px_1px_rgba(80,110,70,0.25)]" />
          <div className="flex shrink-0 flex-col gap-[3px]">
            {students.map((m) => (
              <InBubble key={m.text} {...m} />
            ))}
          </div>
          <div className="mt-2 flex shrink-0 flex-col gap-2">
            <OutBubble time="23:40" box="w-[107px]"><span className="text-[#168acd]">/2</span></OutBubble>
            <InBubble text="Введите фамилию ученика:" time="23:40" box="w-[246px]" last />
            <OutBubble time="23:40" box="w-[126px]">Ввод</OutBubble>
            <InBubble text="Пробный Ввод, 13.11.2022, 11 класс, Отличник" time="23:40" box="w-[365px]" last />
            <OutBubble time="23:40" box="w-[187px]">Вывод данных</OutBubble>
            <InBubble text="Выберите, что вы хотите вывести?" time="23:40" box="w-[289px]" last />
            <OutBubble time="23:41" box="w-[317px]">список учеников одного класса (<span className="text-[#168acd]">/3</span>)</OutBubble>
            <InBubble text="Введите класс" time="23:41" box="w-[160px]" last />
          </div>
        </div>
      </div>
      <div className="flex flex-1 flex-col border-l border-[#e7e7e7] pl-[9px]">
        <div className="flex h-[46px] shrink-0 items-center">
          <button className="h-[30px] w-[63px] rounded-full bg-[#40a7e3] pt-px font-semibold text-white">Меню</button>
          <svg className="ml-3 shrink-0" width="21" height="23" viewBox="0 0 21 23" fill="none" stroke="#999" strokeWidth="1.6" strokeLinecap="round">
            <path d="M2.4 8.5L7.7 3.2C10.5.4 14.5.4 17.2 2.8C20 5.7 19.8 9.4 17.2 12L9.6 19.8C7.5 22 4.5 22 2.6 20.1C.8 18.2 1 15.4 2.9 13.4L10.6 5.7C12 4.3 13.7 4.5 14.7 5.5C15.9 6.8 15.7 8.4 14.5 9.7L7.3 17" />
            <path d="M6 15.5L12.2 9.2" />
          </svg>
          <span className="ml-[18px] pt-[2px] text-[#999]">Написать сообщение...</span>
          <svg className="ml-auto shrink-0" width="24" height="24" viewBox="0 0 24 24" fill="none" stroke="#a3a3a3" strokeWidth="1.7" strokeLinecap="round">
            <rect x="1.6" y="1.8" width="20.2" height="20.2" rx="4" />
            <path d="M6.6 10.6L11.7 14.4L16.8 10.6" />
          </svg>
          <svg className="ml-[21px] shrink-0" width="21" height="24" viewBox="0 0 21 24" fill="none" stroke="#999" strokeWidth="1.6">
            <rect x="6.5" y="1.8" width="8.4" height="15" rx="4.2" />
            <path d="M2.5 12.5C2.7 17.4 6 20.4 10.7 20.4C15.4 20.4 18.7 17.4 19 12.5M10.7 20.4V24" />
          </svg>
        </div>
        <div className="mt-[6px] grid grid-cols-[191px_191px_191px] gap-[10px]">
          {keys.map((k) => (
            <button key={k} className="h-[38px] rounded-[3px] bg-[#f1f1f1] text-[15px] font-semibold tracking-[-0.04px] text-[#222]">{k}</button>
          ))}
        </div>
      </div>
    </div>
  );
}
